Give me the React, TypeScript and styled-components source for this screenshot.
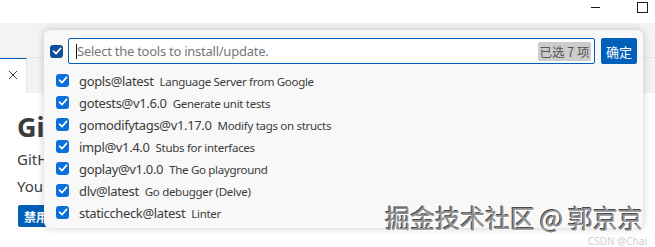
import React from "react";
import styled, { createGlobalStyle } from "styled-components";

const Global = createGlobalStyle`
  html, body { margin: 0; padding: 0; background: #ffffff; }
  body { font-family: "Noto Sans", "Noto Sans CJK SC", sans-serif; }
  #root { width: 655px; height: 247px; overflow: hidden; position: relative; }
`;

const Frame = styled.div`
  width: 655px;
  height: 247px;
  position: relative;
  overflow: hidden;
  background: #ffffff;
  display: flex;
  flex-direction: column;
`;

const TitleBar = styled.div`
  height: 23px;
  background: #ffffff;
  display: flex;
  justify-content: flex-end;
  align-items: flex-start;
  padding-right: 7px;
  gap: 37px;
  box-sizing: border-box;
`;

const MinIcon = styled.div`
  width: 9px;
  height: 1px;
  background: #1b1b1b;
  margin-top: 7px;
`;

const MaxIcon = styled.div`
  width: 9px;
  height: 9px;
  border: 1px solid #1b1b1b;
  margin-top: 2px;
`;

const Toolbar = styled.div`
  height: 34px;
  background: #f3f3f3;
  border-bottom: 1px solid #e5e5e5;
`;

const TabBar = styled.div`
  height: 35px;
  background: #f3f3f3;
  display: flex;
`;

const ActiveTab = styled.div`
  width: 27px;
  background: #ffffff;
  border-top: 1px solid #005fb8;
  border-right: 1px solid #e5e5e5;
  display: flex;
  align-items: center;
  justify-content: center;
  box-sizing: border-box;
  padding-bottom: 2px;
`;

const Content = styled.div`
  padding: 18px 0 0 17px;
  display: flex;
  flex-direction: column;
  color: #3b3b3b;
`;

const Heading = styled.div`
  font-size: 27px;
  font-weight: 700;
  line-height: 32px;
  font-family: "Noto Sans", sans-serif;
`;

const Para = styled.div<{ $mt: number }>`
  font-size: 15px;
  line-height: 20px;
  margin-top: ${(p) => p.$mt}px;
`;

const ButtonRow = styled.div`
  display: flex;
  gap: 10px;
  margin-top: 9px;
  padding-left: 1px;
`;

const PageButton = styled.div<{ $w: number }>`
  width: ${(p) => p.$w}px;
  height: 22px;
  background: #005fb8;
  border-radius: 2px;
  color: #ffffff;
  font-size: 12px;
  font-weight: 700;
  font-family: "Noto Sans CJK SC", sans-serif;
  display: flex;
  align-items: center;
  padding-left: 6px;
  box-sizing: border-box;
`;

const Popup = styled.div`
  position: absolute;
  left: 44px;
  top: 30px;
  width: 599px;
  height: 198px;
  background: #f8f8f8;
  border-radius: 6px;
  box-shadow: 0 0 8px rgba(0, 0, 0, 0.2);
  padding: 8px 6px 0 6px;
  box-sizing: border-box;
  display: flex;
  flex-direction: column;
`;

const HeaderRow = styled.div`
  display: flex;
  align-items: center;
  height: 26px;
`;

const Box = styled.div<{ $dark?: boolean }>`
  width: 13px;
  height: 13px;
  border-radius: 3px;
  background: ${(p) => (p.$dark ? "#0f4f9c" : "#0a6fd8")};
  display: flex;
  align-items: center;
  justify-content: center;
  flex-shrink: 0;
`;

const InputBox = styled.div`
  margin-left: 5px;
  flex: 1;
  height: 26px;
  border: 1px solid #005fb8;
  border-radius: 2px;
  background: #ffffff;
  box-sizing: border-box;
  display: flex;
  align-items: center;
  padding: 0 3px 0 7px;
`;

const Caret = styled.div`
  width: 1px;
  height: 15px;
  background: #1b1b1b;
`;

const Placeholder = styled.div`
  flex: 1;
  color: #767676;
  font-size: 13px;
  letter-spacing: -0.25px;
  font-family: "Noto Sans", sans-serif;
  white-space: nowrap;
`;

const Badge = styled.div`
  height: 19px;
  width: 53px;
  box-sizing: border-box;
  background: #cccccc;
  border-radius: 2px;
  color: #555555;
  font-size: 12.5px;
  font-family: "Noto Sans CJK SC", sans-serif;
  display: flex;
  align-items: center;
  justify-content: center;
`;

const OkButton = styled.div`
  margin-left: 6px;
  width: 36px;
  height: 26px;
  background: #005fb8;
  border-radius: 2px;
  color: #ffffff;
  font-size: 13px;
  font-family: "Noto Sans CJK SC", sans-serif;
  display: flex;
  align-items: center;
  justify-content: center;
`;

const List = styled.div`
  margin-top: 5px;
  display: flex;
  flex-direction: column;
`;

const Row = styled.div`
  height: 22px;
  display: flex;
  align-items: center;
  padding-left: 6px;
  gap: 10px;
  white-space: nowrap;
`;

const Label = styled.span`
  font-size: 13px;
  letter-spacing: -0.35px;
  color: #3b3b3b;
  font-family: "Noto Sans", sans-serif;
`;

const Desc = styled.span`
  font-size: 11.5px;
  letter-spacing: -0.3px;
  color: #3b3b3b;
  margin-left: 6px;
  font-family: "Noto Sans", sans-serif;
`;

const Watermark = styled.div`
  position: absolute;
  right: 12px;
  bottom: 17px;
  font-size: 25px;
  line-height: 25px;
  word-spacing: -1px;
  color: #8f8f8f;
  font-family: "Noto Sans CJK SC", sans-serif;
  text-shadow: 1px 1px 0 #ffffff, -1px -1px 0 #4a4a4a;
  white-space: nowrap;
`;

const SubMark = styled.div`
  position: absolute;
  right: 8px;
  bottom: 0px;
  font-size: 10px;
  line-height: 12px;
  color: #cfcfcf;
  font-family: "Noto Sans", sans-serif;
`;

const Check = () => (
  <svg width="10" height="10" viewBox="0 0 10 10">
    <path d="M1.5 5.2 L4 7.6 L8.6 2.4" stroke="#ffffff" strokeWidth="1.6" fill="none" strokeLinecap="round" strokeLinejoin="round" />
  </svg>
);

const CloseIcon = () => (
  <svg width="10" height="10" viewBox="0 0 10 10">
    <path d="M1 1 L9 9 M9 1 L1 9" stroke="#424242" strokeWidth="1" fill="none" />
  </svg>
);

const tools: [string, string][] = [
  ["gopls@latest", "Language Server from Google"],
  ["gotests@v1.6.0", "Generate unit tests"],
  ["gomodifytags@v1.17.0", "Modify tags on structs"],
  ["impl@v1.4.0", "Stubs for interfaces"],
  ["goplay@v1.0.0", "The Go playground"],
  ["dlv@latest", "Go debugger (Delve)"],
  ["staticcheck@latest", "Linter"],
];

export default function App() {
  return (
    <Frame>
      <Global />
      <TitleBar>
        <MinIcon />
        <MaxIcon />
      </TitleBar>
      <Toolbar />
      <TabBar>
        <ActiveTab>
          <CloseIcon />
        </ActiveTab>
      </TabBar>
      <Content>
        <Heading>Gi</Heading>
        <Para $mt={6}>GitH</Para>
        <Para $mt={7}>Your</Para>
        <ButtonRow>
          <PageButton $w={49}>禁用</PageButton>
          <PageButton $w={49} />
          <PageButton $w={98} />
        </ButtonRow>
      </Content>
      <Popup>
        <HeaderRow>
          <Box $dark>
            <Check />
          </Box>
          <InputBox>
            <Caret />
            <Placeholder>Select the tools to install/update.</Placeholder>
            <Badge>已选 7 项</Badge>
          </InputBox>
          <OkButton>确定</OkButton>
        </HeaderRow>
        <List>
          {tools.map(([name, desc]) => (
            <Row key={name}>
              <Box>
                <Check />
              </Box>
              <span>
                <Label>{name}</Label>
                <Desc>{desc}</Desc>
              </span>
            </Row>
          ))}
        </List>
      </Popup>
      <Watermark>掘金技术社区 @ 郭京京</Watermark>
      <SubMark>CSDN @Chai</SubMark>
    </Frame>
  );
}
